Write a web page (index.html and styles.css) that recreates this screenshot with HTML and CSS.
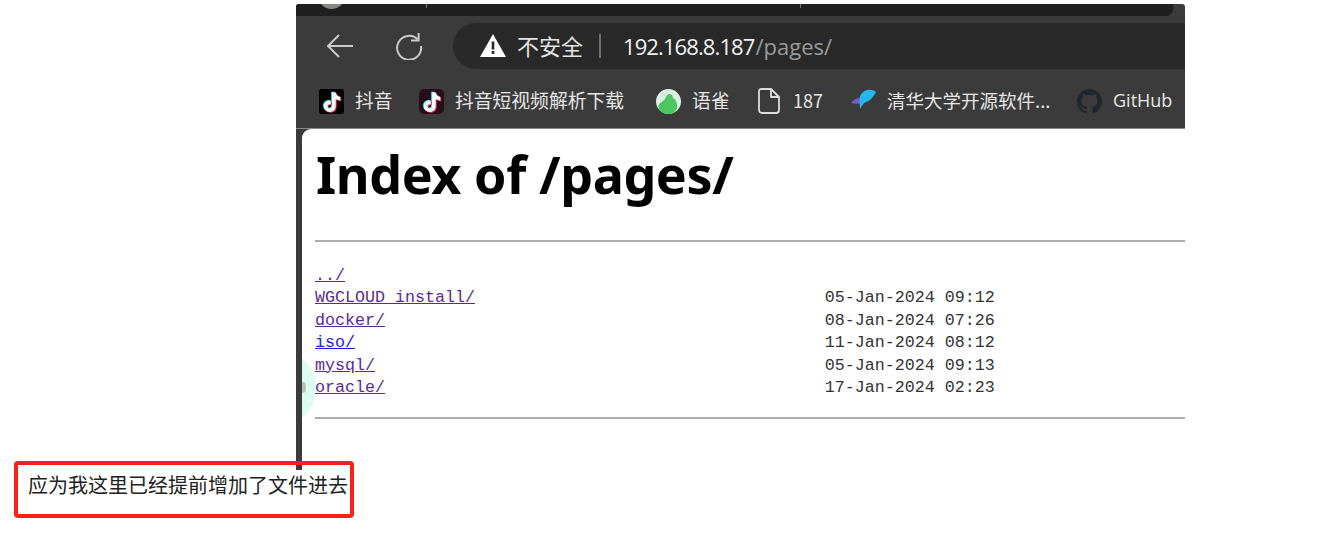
FILE: index.html
```html
<!DOCTYPE html>
<html lang="zh">
<head>
<meta charset="utf-8">
<title>Index of /pages/</title>
<link rel="stylesheet" href="styles.css">
</head>
<body>
<div class="browser">
  <div class="tabstrip"><span class="tab-avatar"></span><span class="tab-div first"></span><span class="tab-div second"></span></div>
  <div class="toolbar">
    <svg class="nav-back" width="28" height="28" viewBox="0 0 28 28"><path d="M27 14H2M13 3 2 14l11 11" fill="none" stroke="#c9c9c9" stroke-width="2"/></svg>
    <svg class="nav-reload" width="28" height="28" viewBox="0 0 28 28"><path d="M22.8 7.5A12 12 0 1 0 26 14" fill="none" stroke="#c9c9c9" stroke-width="2"/><path d="M23.6 1v7.5H16" fill="none" stroke="#c9c9c9" stroke-width="2"/></svg>
    <div class="omnibox">
      <svg class="warn" width="26" height="24" viewBox="0 0 26 24"><path d="M13 0 26 23H0Z" fill="#fff"/><rect x="11.7" y="7.5" width="2.6" height="8" fill="#2a2a2a"/><rect x="11.7" y="17" width="2.6" height="3" fill="#2a2a2a"/></svg>
      <span class="insecure">不安全</span>
      <span class="sep"></span>
      <span class="url"><span class="host">192.168.8.187</span><span class="path">/pages/</span></span>
    </div>
  </div>
  <div class="bookmarks">
    <a class="bm b1"><svg class="ico" width="25" height="25" viewBox="0 0 25 25"><rect width="25" height="25" rx="3" fill="#000"/><g transform="translate(12.5 13) scale(1.2) translate(-12.5 -13)"><path d="M13 5h3c.3 2.200 1.600 3.400 3.800 3.700v3c-1.400 0-2.700-.4-3.800-1.100v5.700c0 3.100-2.300 5-5 5-2.800 0-4.800-2-4.800-4.700 0-3 2.600-5.100 5.700-4.700v3.100c-1.400-.4-2.700.3-2.700 1.600 0 1.100.9 1.800 1.900 1.800 1.100 0 1.900-.8 1.900-2Z" fill="#25f4ee" transform="translate(-.8 -.6)"/><path d="M13 5h3c.3 2.200 1.600 3.400 3.800 3.700v3c-1.400 0-2.700-.4-3.800-1.100v5.700c0 3.100-2.300 5-5 5-2.800 0-4.800-2-4.800-4.700 0-3 2.600-5.100 5.700-4.700v3.100c-1.400-.4-2.700.3-2.700 1.600 0 1.100.9 1.800 1.900 1.800 1.100 0 1.900-.8 1.900-2Z" fill="#fe2c55" transform="translate(.8 .6)"/><path d="M13 5h3c.3 2.200 1.600 3.400 3.800 3.700v3c-1.400 0-2.700-.4-3.800-1.100v5.700c0 3.100-2.300 5-5 5-2.800 0-4.800-2-4.800-4.700 0-3 2.600-5.100 5.700-4.700v3.100c-1.400-.4-2.700.3-2.700 1.600 0 1.100.9 1.800 1.900 1.800 1.100 0 1.900-.8 1.900-2Z" fill="#fff"/></g></svg><span>抖音</span></a>
    <a class="bm b2"><svg class="ico" width="25" height="25" viewBox="0 0 25 25"><rect width="25" height="25" rx="5" fill="#2a0d1c"/><g transform="translate(12.5 13) scale(1.2) translate(-12.5 -13)"><path d="M13 5h3c.3 2.200 1.600 3.400 3.800 3.700v3c-1.400 0-2.700-.4-3.800-1.100v5.700c0 3.100-2.300 5-5 5-2.800 0-4.800-2-4.800-4.700 0-3 2.600-5.100 5.700-4.700v3.100c-1.400-.4-2.700.3-2.700 1.600 0 1.100.9 1.800 1.900 1.800 1.100 0 1.900-.8 1.900-2Z" fill="#25f4ee" transform="translate(-.8 -.6)"/><path d="M13 5h3c.3 2.200 1.600 3.400 3.800 3.700v3c-1.400 0-2.700-.4-3.800-1.100v5.700c0 3.100-2.300 5-5 5-2.800 0-4.800-2-4.800-4.700 0-3 2.600-5.100 5.700-4.700v3.100c-1.400-.4-2.700.3-2.700 1.600 0 1.100.9 1.800 1.900 1.800 1.100 0 1.900-.8 1.900-2Z" fill="#fe2c55" transform="translate(.8 .6)"/><path d="M13 5h3c.3 2.200 1.600 3.400 3.800 3.700v3c-1.400 0-2.700-.4-3.800-1.100v5.700c0 3.100-2.300 5-5 5-2.800 0-4.800-2-4.800-4.700 0-3 2.600-5.100 5.700-4.700v3.100c-1.400-.4-2.700.3-2.700 1.600 0 1.100.9 1.800 1.900 1.800 1.100 0 1.900-.8 1.900-2Z" fill="#fff"/></g></svg><span>抖音短视频解析下载</span></a>
    <a class="bm b3"><svg class="ico" width="25" height="25" viewBox="0 0 25 25"><circle cx="12.500" cy="12.500" r="12.500" fill="#dcefe4"/><path d="M12.500 25C5.700 25 1.800 20.500 2.500 17c.7-3 4-4 6-6.500C10 8.500 10 6.500 12 5.500c2.300-1 4.500 0 4.500 2 0 1 .8 1.500 2 2.700 2 2 3 4.500 2.700 8C20.500 22 17 25 12.500 25Z" fill="#4cc65e"/></svg><span>语雀</span></a>
    <a class="bm b4"><svg class="ico" width="22" height="26" viewBox="0 0 22 26"><path d="M3 1h10l8 8v13a3 3 0 0 1-3 3H4a3 3 0 0 1-3-3V3a2 2 0 0 1 2-2ZM13 1v8h8" fill="none" stroke="#dcdcdc" stroke-width="1.800" stroke-linejoin="round"/></svg><span>187</span></a>
    <a class="bm b5"><svg class="ico" width="25" height="24" viewBox="0 0 25 24"><path d="M0 14c3-4 7-6 11-5 3 1 2 4 0 5-3 1-7 1-11 0Z" fill="#7f58c9"/><path d="M25 3C21 0 15 0 11 4 8 7 8 13 9.500 20c1-3 2.500-5.500 5.500-7 4-1 7.500-5 10-10Z" fill="#22b8ee"/></svg><span>清华大学开源软件...</span></a>
    <a class="bm b6"><svg class="ico" width="25" height="25" viewBox="0 0 16 16"><path fill="#20262d" d="M8 0C3.580 0 0 3.580 0 8c0 3.540 2.290 6.530 5.470 7.590.4.070.55-.17.55-.38 0-.19-.01-.82-.01-1.490-2.010.37-2.530-.49-2.690-.94-.09-.23-.48-.94-.82-1.130-.28-.15-.68-.52-.01-.53.630-.01 1.080.58 1.230.82.720 1.210 1.870.87 2.330.66.070-.52.280-.87.510-1.070-1.780-.2-3.640-.89-3.640-3.950 0-.87.310-1.590.82-2.150-.08-.2-.36-1.020.08-2.120 0 0 .670-.21 2.200.82.640-.18 1.320-.27 2-.27s1.360.09 2 .27c1.530-1.040 2.200-.82 2.200-.82.440 1.100.16 1.920.08 2.120.51.560.82 1.270.82 2.150 0 3.070-1.870 3.750-3.650 3.950.29.250.54.730.54 1.480 0 1.070-.01 1.930-.01 2.200 0 .21.150.46.55.38A8.010 8.010 0 0 0 16 8c0-4.420-3.580-8-8-8Z"/></svg><span>GitHub</span></a>
  </div>
  <div class="page">
    <h1 class="title">Index of /pages/</h1>
    <hr class="rule first-rule">
    <pre class="listing"><a class="visited">../</a>
<a class="visited">WGCLOUD install/</a>                                   05-Jan-2024 09:12
<a class="visited">docker/</a>                                            08-Jan-2024 07:26
<a class="fresh">iso/</a>                                               11-Jan-2024 08:12
<a class="visited">mysql/</a>                                             05-Jan-2024 09:13
<a class="visited">oracle/</a>                                            17-Jan-2024 02:23</pre>
    <hr class="rule last-rule">
  </div>
</div>
<span class="blob"><span class="blob-dot"></span></span>
<div class="note">应为我这里已经提前增加了文件进去</div>
</body>
</html>
```
FILE: styles.css
```css
* { box-sizing: border-box; }
html, body { margin: 0; padding: 0; background: #fff; }
body { padding: 4px 0 0 296px; height: 537px; overflow: hidden; position: relative; font-family: "Noto Sans", "Noto Sans CJK SC", sans-serif; }

.browser { width: 889px; height: 466px; background: #3b3b3b; border-radius: 3px 3px 0 0; display: flex; flex-direction: column; overflow: hidden; }

.tabstrip { height: 12px; margin-right: 12px; background: #1f1f1f; border-radius: 0 0 7px 0; position: relative; overflow: hidden; flex: none; }
.tab-avatar { position: absolute; left: 22px; top: -22px; width: 27px; height: 27px; border-radius: 50%; background: #8b8684; }
.tab-div { position: absolute; top: 0; width: 1px; height: 4px; background: #777; }
.tab-div.first { left: 130px; }
.tab-div.second { left: 504px; }

.toolbar { height: 46px; margin-top: 7px; display: flex; align-items: center; flex: none; }
.nav-back { margin-left: 30px; flex: none; }
.nav-reload { margin-left: 41px; flex: none; }
.omnibox { margin-left: 30px; flex: 1; height: 46px; background: #292929; border-radius: 23px 0 0 23px; display: flex; align-items: center; color: #eee; font-size: 22px; padding-left: 27px; }
.warn { flex: none; }
.insecure { margin: -2px 0 0 11px; font-family: "Noto Sans CJK SC", sans-serif; color: #e4e4e4; line-height: 1; }
.sep { width: 2px; height: 24px; background: #6f6f6f; margin: 0 22px 0 16px; }
.url { white-space: nowrap; font-size: 22px; font-family: "Open Sans", sans-serif; line-height: 1; }
.host { color: #f2f2f2; letter-spacing: -.9px; }
.path { color: #9a9a9a; letter-spacing: 0; margin-left: 1px; }

.bookmarks { height: 60px; display: flex; align-items: center; flex: none; border-bottom: 1px solid #8a8a8a; padding: 5px 0 0 23px; font-family: "Noto Sans CJK SC", sans-serif; font-size: 18.8px; color: #e6e6e6; }
.bm { display: flex; align-items: center; gap: 11px; white-space: nowrap; flex: none; line-height: 1; }
.bm span { margin-top: -2px; }
.ico { flex: none; display: block; }
.b1 { width: 100px; }
.b2 { width: 237px; }
.b3 { width: 102px; }
.b4 { width: 93px; gap: 13px; font-size: 18px; }
.b5 { width: 226px; font-size: 18.5px; }
.b6 { width: 100px; font-family: "Open Sans", sans-serif; font-size: 18px; }

.page { flex: 1; margin-left: 6px; background: #fff; border-radius: 9px 0 0 0; padding: 11px 0 0 13px; color: #000; }
.title { margin: 0 0 0 1px; font-family: "Noto Sans", sans-serif; font-size: 52px; font-weight: 700; line-height: 68px; letter-spacing: -.4px; }
.rule { margin: 0; border: 0; height: 2px; background: #adadad; }
.first-rule { margin-top: 32px; }
.listing { position: relative; z-index: 1; margin: 23px 0 0; font-family: "Liberation Mono", monospace; font-size: 16.67px; line-height: 22.400px; color: #333; }
.listing a { text-decoration: underline; }
.visited { color: #5b2a96; }
.fresh { color: #1a1aee; }
.last-rule { margin-top: 18px; }

.blob { position: absolute; left: 302px; top: 358px; width: 14px; height: 60px; overflow: hidden; }
.blob::before { content: ""; position: absolute; left: -64px; top: -9px; width: 78px; height: 78px; border-radius: 50%; background: #dcfbf1; }
.blob-dot { position: absolute; left: 0; top: 24px; width: 4px; height: 11px; background: #b4c4be; border-radius: 0 6px 6px 0; }

.note { position: absolute; left: 14px; top: 461px; width: 340px; height: 57px; border: 4px solid #fb1f14; border-radius: 4px; padding: 8px 0 0 10px; font-family: "Noto Sans CJK SC", sans-serif; font-size: 20px; line-height: 24px; color: #222; white-space: nowrap; }
```
